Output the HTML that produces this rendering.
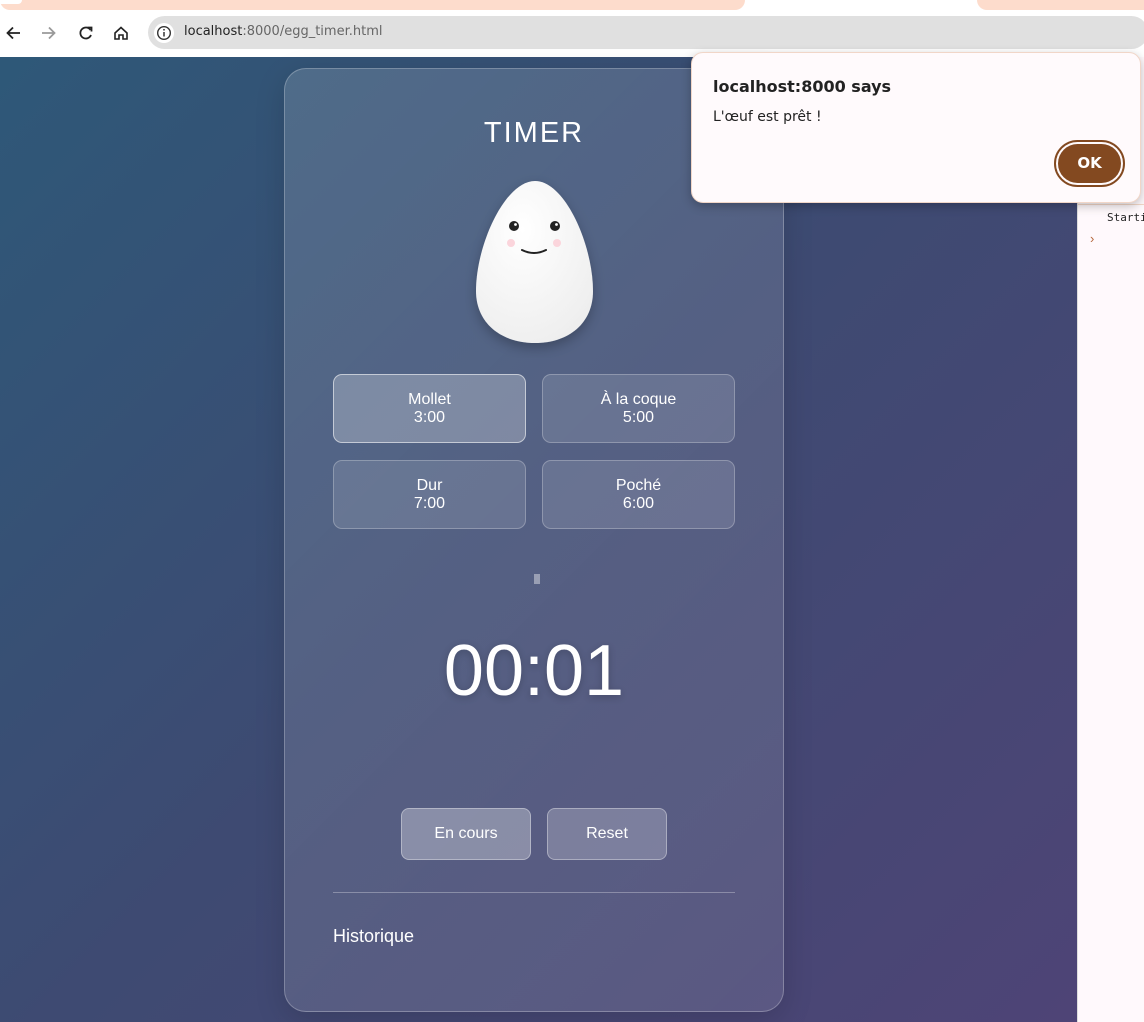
<!DOCTYPE html>
<html><head><meta charset="utf-8"><style>
*{margin:0;padding:0;box-sizing:border-box}
body{width:1144px;height:1022px;overflow:hidden;font-family:"Liberation Sans",sans-serif;background:#fff;position:relative}
.tabs{position:absolute;left:0;top:0;width:1144px;height:10px;background:#fff}
.t1{position:absolute;left:0;top:0;width:745px;height:10px;background:#fddccc;border-radius:0 0 10px 10px}
.t2{position:absolute;left:977px;top:0;width:167px;height:10px;background:#fddccc;border-radius:0 0 0 10px}
.t0{position:absolute;left:0;top:0;width:22px;height:4px;background:#fff;border-radius:0 0 8px 0}
.bar{position:absolute;left:0;top:10px;width:1144px;height:47px;background:#fff}
.addr{position:absolute;left:148px;top:16px;width:1000px;height:33px;background:#e0e0e0;border-radius:17px}
.url{position:absolute;left:184px;top:24px;font-family:"DejaVu Sans",sans-serif;font-size:13px;color:#222}
.url span{color:#666}
.page{position:absolute;left:0;top:57px;width:1077px;height:965px;background:linear-gradient(135deg,#2e5878 0%,#3e4a72 50%,#4e4476 100%)}
.dev{position:absolute;left:1077px;top:57px;width:67px;height:965px;background:#fff9fc;border-left:1px solid #ddd}
.card{position:absolute;left:284px;top:68px;width:500px;height:944px;border-radius:22px;background:linear-gradient(135deg,rgba(255,255,255,.14),rgba(255,255,255,.1));border:1px solid rgba(255,255,255,.25);box-shadow:0 8px 30px rgba(0,0,0,.15)}
.title{position:absolute;left:0;width:100%;top:48px;text-align:center;color:#fff;font-size:29px;letter-spacing:2px}
.btn{position:absolute;width:193px;height:69px;border-radius:9px;border:1px solid rgba(255,255,255,.25);background:rgba(255,255,255,.12);color:#fff;font-size:16px;text-align:center;padding-top:16px;line-height:18px}
.btn.sel{background:rgba(255,255,255,.25);border-color:rgba(255,255,255,.55)}
.time{position:absolute;left:0;width:100%;top:561px;text-align:center;color:#fff;font-size:72px;text-shadow:0 2px 8px rgba(0,0,0,.2)}
.cb{position:absolute;height:52px;top:739px;border-radius:8px;color:#fff;font-size:16px;text-align:center;line-height:50px;border:1px solid rgba(255,255,255,.35)}
.dlg{position:absolute;left:691px;top:52px;width:450px;height:151px;background:#fffafc;border:1px solid #f1d6c8;border-radius:12px;box-shadow:0 3px 10px rgba(0,0,0,.25)}
.dlg h1{position:absolute;left:21px;top:24px;font-family:"DejaVu Sans",sans-serif;font-size:16px;font-weight:bold;color:#222}
.dlg p{position:absolute;left:21px;top:56px;font-family:"DejaVu Sans",sans-serif;font-size:14px;color:#222}
.ok{position:absolute;left:362px;top:87px;width:71px;height:47px;border-radius:24px;border:2px solid #834920;padding:2px}
.ok div{width:100%;height:100%;background:#834920;border-radius:20px;color:#fff;font-family:"DejaVu Sans",sans-serif;font-weight:bold;font-size:15px;text-align:center;line-height:39px}
</style></head><body>
<div class="tabs"><div class="t1"></div><div class="t2"></div><div class="t0"></div></div>
<div class="bar">
<svg style="position:absolute;left:4px;top:14px" width="130" height="18" viewBox="0 0 130 18">
<path d="M16 9H4M9 3.5L3.5 9 9 14.5" stroke="#222" stroke-width="1.8" fill="none"/>
<path d="M38 9H50M45 3.5L50.5 9 45 14.5" stroke="#999" stroke-width="1.8" fill="none"/>
<path d="M86.5 6A5.5 5.5 0 1 0 87 11" stroke="#222" stroke-width="1.8" fill="none"/><path d="M83.5 3.5h4v4" stroke="#222" stroke-width="1.8" fill="none"/>
<path d="M111 9L117 3.5 123 9V15H119V11H115V15H111Z" stroke="#222" stroke-width="1.6" fill="none"/>
</svg></div>
<div class="addr"></div>
<svg style="position:absolute;left:154px;top:23px" width="20" height="20" viewBox="0 0 20 20"><circle cx="10" cy="10" r="10" fill="#fff"/><circle cx="10" cy="10" r="6.3" stroke="#333" stroke-width="1.4" fill="none"/><path d="M10 9v4.5" stroke="#333" stroke-width="1.5"/><circle cx="10" cy="6.8" r=".9" fill="#333"/></svg>
<div class="url">localhost<span>:8000/egg_timer.html</span></div>
<div class="page"></div>
<div class="dev">
<div style="position:absolute;left:0;top:147px;width:67px;border-top:1px solid #f3d8c8"></div>
<div style="position:absolute;left:29px;top:154px;font-family:'DejaVu Sans Mono',monospace;font-size:11px;color:#222">Starti</div>
<div style="position:absolute;left:12px;top:174px;color:#b5683d;font-size:13px">›</div>
</div>
<div class="card">
<div class="title">TIMER</div>
<svg style="position:absolute;left:180px;top:104px" width="140" height="185" viewBox="0 0 140 185">
<defs><radialGradient id="g" cx="40%" cy="30%" r="75%"><stop offset="0" stop-color="#fff"/><stop offset="1" stop-color="#eeeeee"/></radialGradient>
<filter id="s" x="-30%" y="-30%" width="160%" height="160%"><feDropShadow dx="0" dy="5" stdDeviation="6" flood-opacity=".25"/></filter></defs>
<path d="M70 8C40 8 11 72 11 118C11 150 36 170 70 170C104 170 128 150 128 118C128 72 100 8 70 8Z" fill="url(#g)" filter="url(#s)"/>
<circle cx="49" cy="53" r="5" fill="#222"/><circle cx="90" cy="53" r="5" fill="#222"/>
<circle cx="50.5" cy="51.5" r="1.4" fill="#fff"/><circle cx="91.5" cy="51.5" r="1.4" fill="#fff"/>
<circle cx="46" cy="70" r="4" fill="#fbd5dc"/><circle cx="92" cy="70" r="4" fill="#fbd5dc"/>
<path d="M57 77Q69 83 81 77" stroke="#222" stroke-width="2" fill="none" stroke-linecap="round"/>
</svg>
<div class="btn sel" style="left:48px;top:305px">Mollet<br>3:00</div>
<div class="btn" style="left:257px;top:305px">À la coque<br>5:00</div>
<div class="btn" style="left:48px;top:391px">Dur<br>7:00</div>
<div class="btn" style="left:257px;top:391px">Poché<br>6:00</div>
<div style="position:absolute;left:249px;top:505px;width:6px;height:10px;background:rgba(255,255,255,.4)"></div>
<div class="time">00:01</div>
<div class="cb" style="left:116px;width:130px;background:rgba(255,255,255,.3)">En cours</div>
<div class="cb" style="left:262px;width:120px;background:rgba(255,255,255,.22)">Reset</div>
<div style="position:absolute;left:48px;top:823px;width:402px;border-top:1px solid rgba(255,255,255,.3)"></div>
<div style="position:absolute;left:48px;top:857px;color:#fff;font-size:18px">Historique</div>
</div>
<div class="dlg"><h1>localhost:8000 says</h1><p>L'œuf est prêt !</p><div class="ok"><div>OK</div></div></div>
</body></html>
